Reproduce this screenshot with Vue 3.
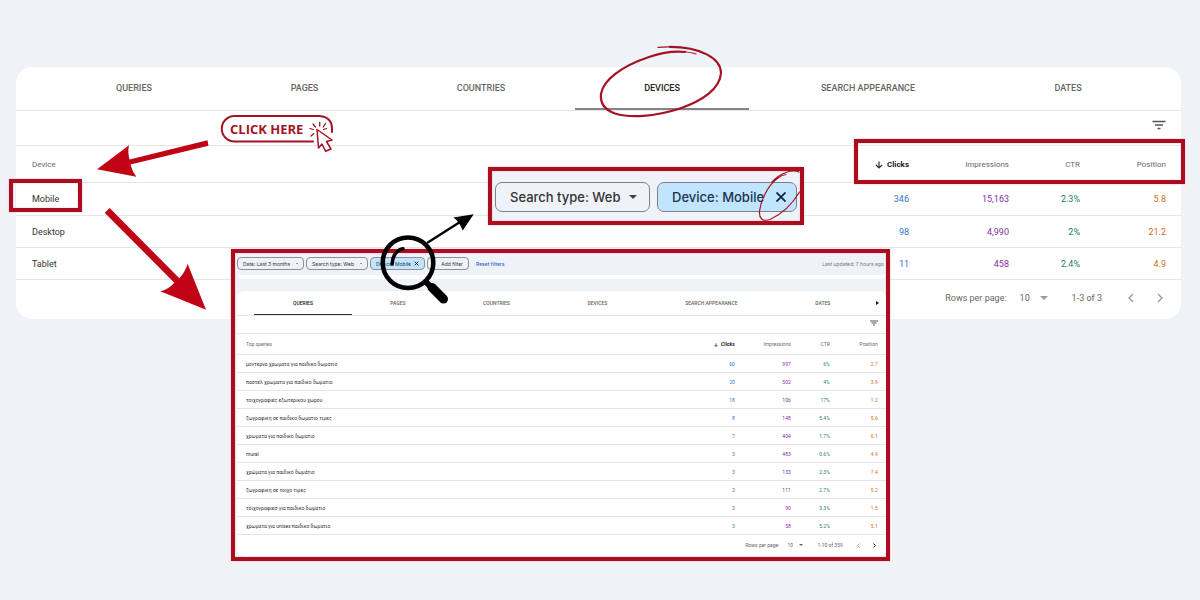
<script setup>
const tabs = ['QUERIES', 'PAGES', 'COUNTRIES', 'DEVICES', 'SEARCH APPEARANCE', 'DATES']

const devices = [
  ['Mobile', '346', '15,163', '2.3%', '5.8'],
  ['Desktop', '98', '4,990', '2%', '21.2'],
  ['Tablet', '11', '458', '2.4%', '4.9'],
]

const queries = [
  ['μοντερνα χρωματα για παιδικο δωματιο', '60', '997', '6%', '2.7'],
  ['παστελ χρωματα για παιδικο δωματιο', '20', '502', '4%', '3.9'],
  ['τοιχογραφιες εξωτερικου χωρου', '18', '106', '17%', '1.2'],
  ['ζωγραφικη σε παιδικο δωματιο τιμες', '8', '148', '5.4%', '5.6'],
  ['χρωματα για παιδικο δωματιο', '7', '404', '1.7%', '6.1'],
  ['mural', '3', '483', '0.6%', '4.9'],
  ['χρώματα για παιδικό δωμάτιο', '3', '133', '2.3%', '7.4'],
  ['ζωγραφικη σε τοιχο τιμες', '3', '111', '2.7%', '5.2'],
  ['τοιχογραφιεσ για παιδικο δωματιο', '3', '90', '3.3%', '1.5'],
  ['χρωματα για unisex παιδικο δωματιο', '3', '58', '5.2%', '5.1'],
]
</script>

<template>
  <main class="stage">
    <section class="card" aria-label="Performance by device">
      <nav class="tabs">
        <button v-for="t in tabs" :key="t" type="button" :class="{ active: t === 'DEVICES' }">{{ t }}</button>
      </nav>
      <div class="tools">
        <button type="button" class="icon" aria-label="Filter rows">
          <svg width="14" height="10" viewBox="0 0 14 10"><path d="M0.500 1.500h13M3 5h8M5.500 8.500h3" stroke="#555" stroke-width="1.600" /></svg>
        </button>
      </div>
      <table>
        <colgroup><col /><col class="c1" /><col class="c2" /><col class="c3" /><col class="c4" /></colgroup>
        <thead>
          <tr>
            <th>Device</th>
            <th class="sorted">
              <svg class="down" viewBox="0 0 8 8"><path d="M4 0.500v6.500M1 4l3 3 3-3" fill="none" stroke="#333" stroke-width="1.200" /></svg>Clicks
            </th>
            <th>Impressions</th><th>CTR</th><th>Position</th>
          </tr>
        </thead>
        <tbody>
          <tr v-for="r in devices" :key="r[0]"><td v-for="(c, i) in r" :key="i">{{ c }}</td></tr>
        </tbody>
      </table>
      <footer class="pager">
        <label for="rows">Rows per page:</label>
        <span class="pick">
          <select id="rows"><option>10</option></select>
          <svg viewBox="0 0 8 4"><path d="M0 0h8L4 4z" fill="#999" /></svg>
        </span>
        <span class="range">1-3 of 3</span>
        <button type="button" class="icon" aria-label="Previous page"><svg viewBox="0 0 6 10"><path d="M5 1L1 5l4 4" fill="none" stroke="#999" stroke-width="1.300" /></svg></button>
        <button type="button" class="icon" aria-label="Next page"><svg viewBox="0 0 6 10"><path d="M1 1l4 4-4 4" fill="none" stroke="#999" stroke-width="1.300" /></svg></button>
      </footer>
    </section>

    <section class="panel frame" aria-label="Queries on mobile">
      <div class="filters">
        <button type="button" class="chip date">Date: Last 3 months<i class="caret"></i></button>
        <button type="button" class="chip type">Search type: Web<i class="caret"></i></button>
        <button type="button" class="chip device on">Device: Mobile<svg class="x" viewBox="0 0 8 8"><path d="M1 1l6 6M7 1l-6 6" stroke="#123" stroke-width="1.500" /></svg></button>
        <button type="button" class="chip add"><span>+</span>Add filter</button>
        <a href="#reset">Reset filters</a>
        <span class="updated">Last updated: 7 hours ago</span>
      </div>
      <div class="strip"></div>
      <div class="card small">
        <nav class="tabs">
          <button v-for="t in tabs" :key="t" type="button" :class="{ active: t === 'QUERIES' }">{{ t }}</button>
          <button type="button" class="more" aria-label="More tabs"><svg viewBox="0 0 3 4"><path d="M0 0l3 2-3 2z" fill="#111" /></svg></button>
        </nav>
        <div class="tools">
          <button type="button" class="icon" aria-label="Filter queries">
            <svg width="8" height="6" viewBox="0 0 8 6"><path d="M0 1h8M1.500 3h5M3 5h2" stroke="#555" /></svg>
          </button>
        </div>
        <table>
          <colgroup><col /><col class="c1" /><col class="c2" /><col class="c3" /><col class="c4" /></colgroup>
          <thead>
            <tr>
              <th>Top queries</th>
              <th class="sorted">
                <svg class="down" viewBox="0 0 8 8"><path d="M4 0.500v6.500M1 4l3 3 3-3" fill="none" stroke="#333" stroke-width="1.500" /></svg>Clicks
              </th>
              <th>Impressions</th><th>CTR</th><th>Position</th>
            </tr>
          </thead>
          <tbody>
            <tr v-for="r in queries" :key="r[0]"><td v-for="(c, i) in r" :key="i">{{ c }}</td></tr>
          </tbody>
        </table>
        <footer class="pager">
          <label for="rows-small">Rows per page:</label>
          <span class="pick">
            <select id="rows-small"><option>10</option></select>
            <svg viewBox="0 0 8 4"><path d="M0 0h8L4 4z" fill="#666" /></svg>
          </span>
          <span class="range">1-10 of 359</span>
          <button type="button" class="icon" aria-label="Previous queries"><svg viewBox="0 0 6 10"><path d="M5 1L1 5l4 4" fill="none" stroke="#888" stroke-width="1.500" /></svg></button>
          <button type="button" class="icon" aria-label="Next queries"><svg viewBox="0 0 6 10"><path d="M1 1l4 4-4 4" fill="none" stroke="#222" stroke-width="2" /></svg></button>
        </footer>
      </div>
    </section>

    <section class="callout frame" aria-label="Active filters">
      <button type="button" class="chip">Search type: Web<i class="caret"></i></button>
      <button type="button" class="chip on">Device: Mobile<svg class="x" viewBox="0 0 10 10"><path d="M0.500 0.500l9 9M9.500 0.500l-9 9" stroke="#10243c" stroke-width="1.800" /></svg></button>
    </section>

    <div class="mark-head frame"></div>
    <div class="mark-mobile frame"></div>
    <button type="button" class="cta">CLICK HERE</button>

    <svg class="ink" viewBox="0 0 1200 600" aria-hidden="true">
      <g fill="none" stroke="#a41224" stroke-linecap="round">
        <path stroke-width="2" d="M313 141.500H234.500a12.700 12.700 0 0 1 0-25.500H319.500Q332 117 332 129V132" />
        <path stroke-width="1.500" stroke-linejoin="round" fill="#fff" d="M317 129.500L332 140L326.500 141.500L331 149L325.500 151.300L322 144L318.500 148Z" />
        <path stroke-width="1.300" d="M310 128.500l3.300 1M313 124l2.500 3M319.700 122.500v3.500M325.500 123.500l-2.300 3.500M323.500 129.500l3-1M311 136l2.700-2.300" />
        <path stroke-width="2.200" d="M670 46.900C700 47 721 58 721 73C720 89 702 101 680 108.500C654 117 630 118 615 113.500C605 110 600 104 601 94C603 80 622 66 649 57C664 52 675 51 685 52" />
        <path stroke-width="1.200" d="M658 47.300Q665 46.500 675 47M680 51.500Q690 52 696 54" />
        <path stroke-width="1.200" d="M772 182C780 173 792 169 799 172M799.500 192C793 203 782 214 770 219.500C762 222 759 218 759.500 211C761 200 768 185 778 178Q782 175 786 174.500" />
      </g>
      <g fill="#bf0416">
        <path d="M97 169.300L129 145.300Q127.500 152 129.500 159.500L207.500 140.300L208.500 145.800L130.500 164.500Q132 171 136.300 176.700Z" />
        <path d="M109.700 208L179.300 278.300Q184.500 273 187.700 264L206 309.700L160.300 291.300Q169 289 174.300 282.700L104.700 212.700Z" />
      </g>
      <g fill="none" stroke="#000" stroke-linecap="round">
        <circle cx="408" cy="262.700" r="25.300" stroke-width="4.500" />
        <path d="M392.200 264C392 257 396 250 403 248.700" stroke-width="3.500" />
        <path d="M427 283l5 5" stroke-width="6" />
        <path d="M432 287.500L443.500 299" stroke-width="9" />
        <path d="M427 243L460 222" stroke-width="2.400" stroke-linecap="butt" />
        <path d="M473.700 214.300L453.300 217.500Q459 221 462.700 230.500Z" fill="#000" stroke="none" />
      </g>
    </svg>
  </main>
</template>

<style>
body { margin: 0; background: #eff3f8; }
</style>

<style scoped>
.stage {
  position: relative;
  min-height: 600px;
  box-sizing: border-box;
  padding: 67px 19px 0 16px;
  background: #eff3f8;
  color: #333;
  font-family: Roboto, "Liberation Sans", sans-serif;
  font-size: 9px;
}
button, select { font: inherit; color: inherit; background: none; border: 0; margin: 0; padding: 0; }
svg { display: block; }
.card { background: #fff; border-radius: 16px; overflow: hidden; }
.tabs {
  display: grid;
  grid-template-columns: 176fr 165fr 188fr 174fr 238fr 162fr;
  height: 43px;
  padding: 0 32px 0 30px;
  border-bottom: 1px solid #e6e6e8;
  color: #666;
  font-weight: 500;
}
.tabs button { border-bottom: 2px solid transparent; white-space: nowrap; }
.tabs .active { border-color: #858585; color: #222; }
.tools {
  display: flex;
  justify-content: flex-end;
  align-items: center;
  height: 35px;
  padding-right: 15px;
  box-sizing: border-box;
  border-bottom: 1px solid #e6e6e8;
}
.tools .icon { padding-bottom: 7px; }
table { width: 100%; table-layout: fixed; border-collapse: separate; border-spacing: 0; }
.c1 { width: 100px; }
.c2 { width: 100px; }
.c3 { width: 71px; }
.c4 { width: 101px; }
th, td { height: 32px; box-sizing: border-box; padding: 0; text-align: right; white-space: nowrap; border-bottom: 1px solid #e6e6e8; }
tr:first-child td { height: 33px; }
th { height: 37px; color: #6a6a6a; font-weight: 400; font-size: 8px; }
th:first-child, td:first-child { text-align: left; padding-left: 16px; }
th:last-child, td:last-child { padding-right: 15px; }
td:nth-child(2) { color: #2f78cc; }
td:nth-child(3) { color: #8330a6; }
td:nth-child(4) { color: #1d7f69; }
td:nth-child(5) { color: #cf6c20; }
th.sorted { color: #222; font-weight: 700; }
.down { display: inline-block; width: 8px; height: 8px; margin-right: 4px; vertical-align: -2px; }
.pager { display: flex; align-items: center; box-sizing: border-box; height: 39px; padding: 0 18px 3px 0; justify-content: flex-end; color: #666; }
.pick { display: flex; align-items: center; gap: 9px; margin-left: 13px; }
.pick select { appearance: none; }
.pick svg { width: 8px; height: 4px; }
.range { margin: 0 26px 0 24px; }
.pager .icon svg { width: 6px; height: 10px; }
.pager .icon + .icon { margin-left: 23px; }

.frame { position: absolute; box-sizing: border-box; border: 4px solid #ab0d20; box-shadow: 0 0 2px #ffb3bd, inset 0 0 2px #ffb3bd; }
.panel { left: 19.250%; top: 249px; width: 54.900%; padding: 4px 0 1px 2px; background: #eff3f8; font-size: 5px; }
.filters { display: flex; align-items: center; gap: 2px; height: 13px; font-family: Inter, Roboto, sans-serif; }
.chip { display: flex; align-items: center; justify-content: space-between; box-sizing: border-box; height: 13px; padding: 0 5px; border: 1px solid #8d9196; border-radius: 4px; white-space: nowrap; }
.chip.on { background: #c2e5ff; color: #183450; }
.caret { border: 1px solid transparent; border-top-color: #444; border-bottom: 0; }
.filters .x { width: 5px; height: 5px; }
.date { width: 67px; }
.type { width: 62px; }
.device { width: 55px; }
.add { width: 42px; }
.filters a { margin-left: 5px; color: #2b62c9; font-weight: 500; text-decoration: none; }
.updated { margin: 0 2px 0 auto; color: #777; }
.strip { height: 4px; margin: 5px 1px 12px; background: #fff; border-radius: 0 0 6px 6px; }
.small { border-radius: 7px; }
.small .tabs { grid-template-columns: 98fr 92fr 105fr 97fr 131fr 92fr 17px; height: 24px; padding: 0 0 0 17px; }
.small .tabs button { border-bottom-width: 1px; }
.small .tabs .active { border-color: #333; }
.small .more { display: flex; align-items: center; justify-content: center; }
.more svg { width: 3px; height: 4px; }
.small .tools { height: 18px; padding-right: 8px; }
.small .tools .icon { padding-bottom: 3px; }
.small .c1 { width: 56px; }
.small .c2 { width: 56px; }
.small .c3 { width: 39px; }
.small .c4 { width: 56px; }
.small tr td { height: 18px; }
.small tr:first-child td { height: 18px; }
.small th { height: 21px; font-size: 5px; }
.small th:first-child, .small td:first-child { padding-left: 9px; }
.small th:last-child, .small td:last-child { padding-right: 8px; }
.small .down { width: 4px; height: 4px; margin-right: 3px; vertical-align: -1px; }
.small .pager { height: 21px; padding: 0 10px 1px 0; }
.small .pick { gap: 6px; margin-left: 8px; }
.small .pick svg { width: 4px; height: 2px; }
.small .range { margin: 0 14px 0 14px; }
.small .pager .icon svg { width: 3px; height: 5px; }
.small .pager .icon + .icon { margin-left: 13px; }

.callout { left: 488px; top: 167px; width: 316px; height: 58px; display: flex; align-items: center; gap: 7px; padding: 2px 3px 0; background: #eff2f8; font: 500 13px Inter, Roboto, sans-serif; }
.callout .chip { flex: 155 1 0; height: 30px; padding: 0 12px 0 14px; border-color: #7d8186; border-radius: 7px; }
.callout .chip.on { flex: 139 1 0; padding-right: 10px; }
.callout .caret { border-width: 4px; border-bottom-width: 0; }
.callout .x { width: 10px; height: 10px; }
.mark-head { right: 15px; top: 139px; width: 331px; height: 45px; }
.mark-mobile { left: 9px; top: 179px; width: 73px; height: 33px; }
.cta { position: absolute; left: 221px; top: 115px; width: 112px; height: 27px; padding-left: 9px; text-align: left; color: #a41224; font: 700 13px "Open Sans", sans-serif; white-space: nowrap; }
.ink { position: absolute; left: 0; top: 0; width: 100%; height: auto; pointer-events: none; }
</style>
